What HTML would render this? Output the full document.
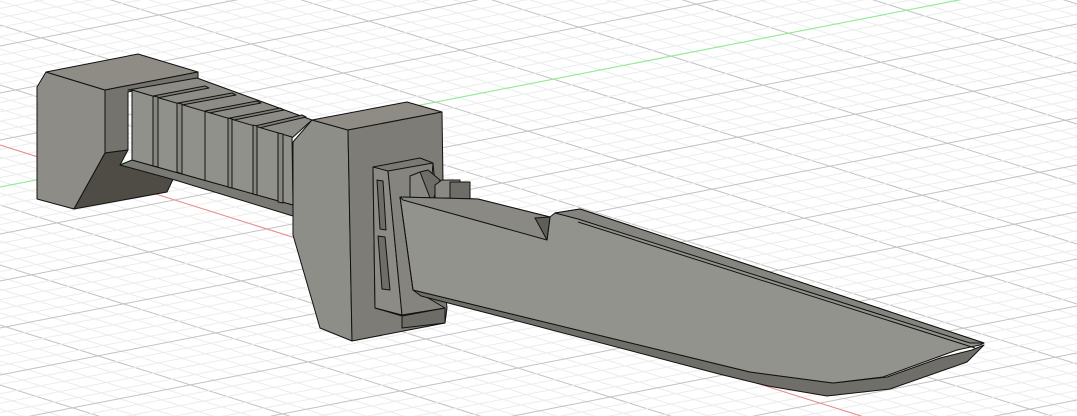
<!DOCTYPE html>
<html><head><meta charset="utf-8"><style>
html,body{margin:0;padding:0;background:#fff;overflow:hidden;width:1077px;height:416px}
svg{display:block}
</style></head><body>
<svg id="s" width="1077" height="416" viewBox="0 0 1077 416" xmlns="http://www.w3.org/2000/svg">
<g id="grid"></g>
<line x1="0" y1="145" x2="1077" y2="484" stroke="#f08a8a" stroke-width="1"/>
<line x1="0" y1="187" x2="1077" y2="-23" stroke="#8ef08e" stroke-width="1"/>
<g stroke="#111" stroke-width="1" stroke-linejoin="round">
<!-- pommel -->
<polygon points="46,72 37,87 37,199 74,209 105,153 128,150 128,92 105,90" fill="#8d8c86"/>
<polygon points="46,72 138,54 198,72 105,90" fill="#8f8c86"/>
<polygon points="105,90 198,72 198,78 128,92 128,150 105,153" fill="#74736d"/>
<polygon points="74,209 105,153 128,150 120,165 175,175 167,192" fill="#4f4b45"/>
<!-- grip -->
<polygon points="128,90 197,78 312,120 292,138 132,90" fill="#8e8c86"/>
<g fill="#7f7e78">
<polygon points="153,96 205,86 209,88 157,98"/>
<polygon points="178,103 232,93 236,95 182,105"/>
<polygon points="205,111 257,101 261,103 209,113"/>
<polygon points="230,118 280,108 284,110 234,120"/>
<polygon points="255,126 302,115 306,117 259,128"/>
</g>
<polygon points="120,165 132,160 293,205 293,216 175,180" fill="#7a7973"/>
<polygon points="132,90 292,137 293,205 132,160" fill="#91918b"/>
<g fill="#87867f">
<polygon points="153,96 158,97 158,167 153,166"/>
<polygon points="177,103 182,104 182,174 177,172"/>
<polygon points="228,118 232,119 232,188 228,187"/>
<polygon points="253,125 257,126 257,195 253,194"/>
<polygon points="278,133 283,134 283,203 278,202"/>
</g>
<line x1="205" y1="111" x2="205" y2="181" fill="none"/>
<!-- guard -->
<polygon points="312,120 293,142 293,235 320,328 352,341 348,130" fill="#8e8e88"/>
<polygon points="312,120 407,102 442,112 348,130" fill="#8f8c86"/>
<polygon points="348,130 442,112 445,323 352,341" fill="#7d7c76"/>
<!-- bracket -->
<polygon points="375,308 373,167 420,158 433,163 447,308 445,323 402,316" fill="#7a7973"/>
<polygon points="373,167 388,171 402,315 375,308" fill="#8c8b85"/>
<polygon points="388,171 433,163 423,295 445,308 402,315" fill="#85847e"/>
<polygon points="377,180 383,181 386,230 380,229" fill="#6e6d68"/>
<polygon points="378,236 385,237 390,290 382,289" fill="#6e6d68"/>
<polygon points="402,316 445,308 445,323 402,328" fill="#6d6c67"/>
<!-- tang blocks -->
<polygon points="410,176 420,172 430,176 432,203 410,202" fill="#8a8983"/>
<polygon points="420,172 428,170 440,180 432,203" fill="#6e6d68"/>
<polygon points="435,185 442,180 460,180 460,203 435,203" fill="#8a8983"/>
<polygon points="450,182 470,182 470,203 450,203" fill="#6e6d68"/>
<!-- blade bevel -->
<polygon points="413,290 421,296 491,314 719,374 768,386 827,396 890,389 967,362 984,345 972,350 940,358 887,377 833,383 750,372" fill="#6f6e68"/>
<!-- blade face -->
<polygon points="400,197 478,199 550,217 555,213 580,209 984,343 980,345 957,350 883,377 833,383 750,372 413,290" fill="#93938d"/>
<polygon points="400,197 478,199 550,217 547,240 403,200" fill="#8a8983"/>
<polygon points="535,218 550,217 547,240" fill="#5f5e59"/>
<polygon points="555,213 580,209 984,343 970,343 578,219" fill="#85847e"/>
<line x1="578" y1="222" x2="975" y2="348" fill="none"/>
<line x1="400" y1="197" x2="413" y2="290" fill="none"/>
</g>
</svg>
<script>
(function(){
var g=document.getElementById('grid'),h='';
function ln(x1,y1,x2,y2,c){h+='<line x1="'+x1+'" y1="'+y1+'" x2="'+x2+'" y2="'+y2+'" stroke="'+c+'" stroke-width="1"/>';}
for(var i=-60;i<60;i++){var y=145+i*12;ln(0,y,1077,y+339,(i%5==0)?'#c2c2c2':'#ececec');}
for(var j=-30;j<90;j++){var y2=187+j*9.4;ln(0,y2,1077,y2-210,(j%5==0)?'#c2c2c2':'#ececec');}
g.innerHTML=h;
})();
</script>
</body></html>
